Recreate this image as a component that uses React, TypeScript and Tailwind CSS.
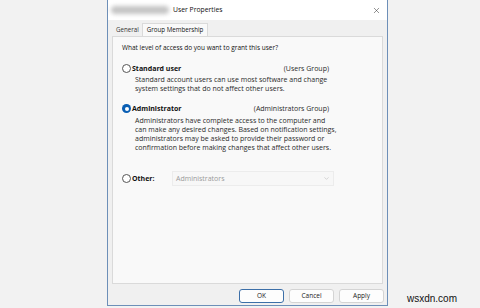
import { X, ChevronDown } from "lucide-react";

function Radio({ checked }: { checked?: boolean }) {
    return checked ? (
        <span className="w-[9px] h-[9px] rounded-full bg-[#0a5fb4] flex items-center justify-center shrink-0">
            <span className="w-[4px] h-[4px] rounded-full bg-white" />
        </span>
    ) : (
        <span className="w-[9px] h-[9px] rounded-full border border-[#555] bg-white shrink-0" />
    );
}

function Btn({ label, primary }: { label: string; primary?: boolean }) {
    return (
        <button
            className={`w-[45px] h-[14px] rounded-[3px] bg-[#fdfdfd] text-[6.5px] leading-none text-[#222] border ${primary ? "border-[#3c6fa8]" : "border-[#d4d4d4]"}`}
        >
            {label}
        </button>
    );
}

export default function App() {
    return (
        <div className="w-[480px] h-[308px] bg-[#f2f2f2] relative overflow-hidden font-['Open_Sans',sans-serif] text-[#111]">
            <div className="absolute left-[107px] top-0 w-[281px] h-[306px] bg-[#f0f0f0] border-x border-b border-[#6d8fb8] flex flex-col">
                {/* title bar */}
                <div className="h-[20px] bg-white flex items-center pl-[3px] pr-[6px] shrink-0">
                    <div className="w-[58px] h-[8px] bg-[#c4c4c4] rounded-sm blur-[2px]" />
                    <span className="ml-[4px] text-[6.8px]">User Properties</span>
                    <X className="ml-auto w-[9px] h-[9px] text-[#333]" strokeWidth={1.4} />
                </div>
                {/* tabs */}
                <div className="flex items-end pl-[5px] h-[16px] text-[6.2px] shrink-0">
                    <div className="px-[3px] h-[13px] flex items-center text-[#333]">General</div>
                    <div className="px-[4px] h-[13px] flex items-center bg-[#f9f9f9] border-x border-t border-[#dadada]">Group Membership</div>
                </div>
                {/* panel */}
                <div className="mx-[4px] h-[248px] bg-[#f9f9f9] border border-[#dadada] text-[7px] leading-[9px] pl-[9px] pt-[6px] shrink-0">
                    <div className="text-[6.5px]">What level of access do you want to grant this user?</div>

                    <div className="mt-[12px] flex items-center gap-[1px] w-[207px]">
                        <Radio />
                        <span className="font-bold">Standard user</span>
                        <span className="ml-auto text-[#2a2a2a]">(Users Group)</span>
                    </div>
                    <div className="pl-[13px] mt-[2px] text-[#2a2a2a]">
                        Standard account users can use most software and change<br />
                        system settings that do not affect other users.
                    </div>

                    <div className="mt-[11px] flex items-center gap-[1px] w-[207px]">
                        <Radio checked />
                        <span className="font-bold">Administrator</span>
                        <span className="ml-auto text-[#2a2a2a]">(Administrators Group)</span>
                    </div>
                    <div className="pl-[13px] mt-[3px] text-[#2a2a2a]">
                        Administrators have complete access to the computer and<br />
                        can make any desired changes. Based on notification settings,<br />
                        administrators may be asked to provide their password or<br />
                        confirmation before making changes that affect other users.
                    </div>

                    <div className="mt-[19px] flex items-center">
                        <Radio />
                        <span className="font-bold ml-[1px] w-[40px]">Other:</span>
                        <div className="w-[162px] h-[15px] border border-[#ececec] bg-[#f7f7f7] flex items-center px-[3px] text-[#9a9a9a]">
                            Administrators
                            <ChevronDown className="ml-auto w-[7px] h-[7px] text-[#bbb]" />
                        </div>
                    </div>
                </div>
                {/* buttons */}
                <div className="flex justify-end gap-[5px] pr-[3px] mt-[5px]">
                    <Btn label="OK" primary />
                    <Btn label="Cancel" />
                    <Btn label="Apply" />
                </div>
            </div>
            <div className="absolute left-[407px] top-[291px] text-[10px] text-[#111] font-['Liberation_Sans',sans-serif]">wsxdn.com</div>
        </div>
    );
}
